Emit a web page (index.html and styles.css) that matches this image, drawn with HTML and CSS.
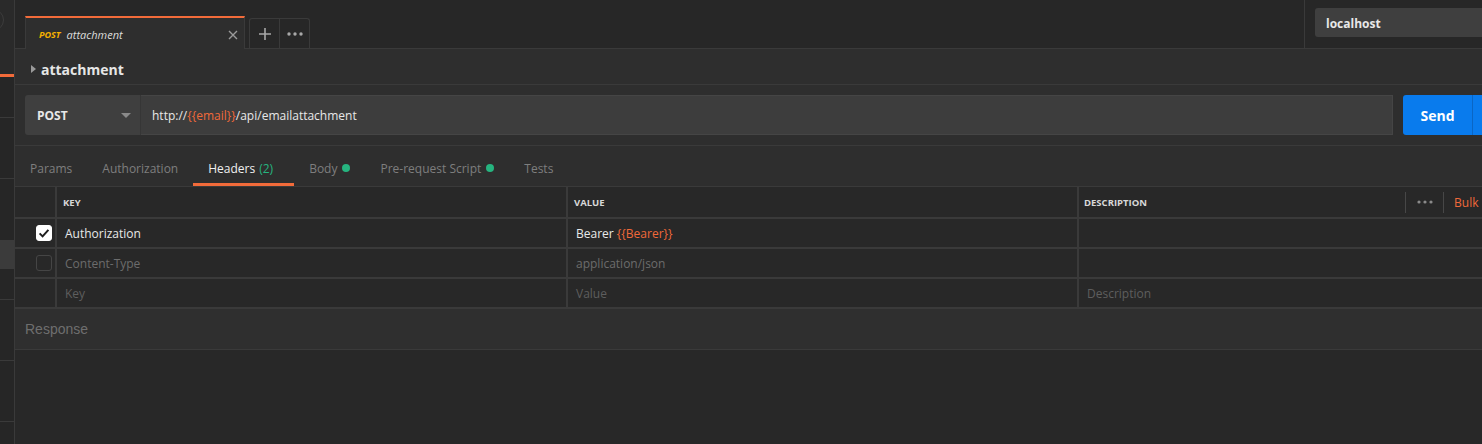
FILE: index.html
```html
<!DOCTYPE html>
<html>
<head>
<meta charset="utf-8">
<link rel="stylesheet" href="styles.css">
</head>
<body>
<div class="app">
  <aside class="sidebar">
    <div class="sb-top"><div class="sb-circle"></div></div>
    <div class="sb-accent"></div>
    <div class="sb-sec h40"></div>
    <div class="sb-sec h60"></div>
    <div class="sb-sec h120"><div class="sb-sel"></div></div>
    <div class="sb-sec h60"></div>
    <div class="sb-sec h60"></div>
    <div class="sb-rest"></div>
  </aside>
  <main class="main">
    <div class="topbar">
      <div class="req-tab">
        <span class="tab-method">POST</span>
        <span class="tab-name">attachment</span>
        <svg class="tab-close" width="10" height="10" viewBox="0 0 10 10"><path d="M1 1L9 9M9 1L1 9" stroke="#9a9a9a" stroke-width="1.4"/></svg>
      </div>
      <div class="tab-actions">
        <div class="tab-btn"><svg width="12" height="12" viewBox="0 0 12 12"><path d="M6 0V12M0 6H12" stroke="#a8a8a8" stroke-width="1.6"/></svg></div>
        <div class="tab-btn last"><svg width="16" height="4" viewBox="0 0 16 4"><circle cx="2" cy="2" r="1.7" fill="#a8a8a8"/><circle cx="8" cy="2" r="1.7" fill="#a8a8a8"/><circle cx="14" cy="2" r="1.7" fill="#a8a8a8"/></svg></div>
      </div>
      <div class="spacer"></div>
      <div class="env-area">
        <div class="env-box">localhost</div>
      </div>
    </div>
    <div class="title-row">
      <span class="caret"></span>
      <span class="title">attachment</span>
    </div>
    <div class="url-row">
      <div class="method">
        <span>POST</span>
        <span class="down"></span>
      </div>
      <div class="url-input">http://<span class="var">{{email}}</span>/api/emailattachment</div>
      <div class="send-group">
        <div class="send">Send</div>
        <div class="send-more"></div>
      </div>
    </div>
    <div class="tabs-row">
      <div class="tab">Params</div>
      <div class="tab">Authorization</div>
      <div class="tab active">Headers <span class="count">(2)</span></div>
      <div class="tab">Body <span class="dot"></span></div>
      <div class="tab">Pre-request Script <span class="dot"></span></div>
      <div class="tab">Tests</div>
    </div>
    <div class="grid">
      <div class="cell head"></div>
      <div class="cell head">KEY</div>
      <div class="cell head">VALUE</div>
      <div class="cell head desc-head">
        <span>DESCRIPTION</span>
        <span class="tools">
          <span class="vsep"></span>
          <svg class="more" width="16" height="4" viewBox="0 0 16 4"><circle cx="2" cy="2" r="1.6" fill="#8a8a8a"/><circle cx="8" cy="2" r="1.6" fill="#8a8a8a"/><circle cx="14" cy="2" r="1.6" fill="#8a8a8a"/></svg>
          <span class="vsep"></span>
          <span class="bulk">Bulk Edit</span>
        </span>
      </div>

      <div class="cell check"><span class="cb on"><svg width="16" height="16" viewBox="0 0 16 16"><path d="M3.6 8.4L6.6 11.4L12.4 4.8" fill="none" stroke="#1e1e1e" stroke-width="2"/></svg></span></div>
      <div class="cell">Authorization</div>
      <div class="cell">Bearer&nbsp;<span class="var">{{Bearer}}</span></div>
      <div class="cell"></div>

      <div class="cell check"><span class="cb"></span></div>
      <div class="cell dim">Content-Type</div>
      <div class="cell dim">application/json</div>
      <div class="cell"></div>

      <div class="cell check"></div>
      <div class="cell ph">Key</div>
      <div class="cell ph">Value</div>
      <div class="cell ph">Description</div>
    </div>
    <div class="response">Response</div>
    <div class="resp-body"></div>
  </main>
</div>
</body>
</html>
```
FILE: styles.css
```css
html, body {
  margin: 0;
  padding: 0;
  background: #282828;
  overflow: hidden;
}
body {
  font-family: "Open Sans", "DejaVu Sans", sans-serif;
  color: #e6e6e6;
}
.app {
  display: flex;
  width: 1482px;
  height: 444px;
  overflow: hidden;
}

/* sidebar */
.sidebar {
  width: 14px;
  flex: none;
  border-right: 1px solid #3a3a3a;
  background: #262626;
  display: flex;
  flex-direction: column;
  overflow: hidden;
}
.sb-top {
  height: 74px;
  background: #2a2a2a;
  overflow: hidden;
}
.sb-circle {
  width: 20px;
  height: 20px;
  border: 1px solid #3c3c3c;
  border-radius: 50%;
  margin: 9px 0 0 -18px;
}
.sb-accent {
  height: 3px;
  background: #f26b3a;
}
.sb-sec {
  border-bottom: 1px solid #3a3a3a;
}
.h40 { height: 40px; }
.h60 { height: 60px; }
.h120 { height: 120px; }
.sb-sel {
  margin-top: 61px;
  height: 29px;
  background: #3b3b3b;
}
.sb-rest { flex: 1; }

/* main */
.main {
  width: 1520px;
  flex: none;
  display: flex;
  flex-direction: column;
  background: #2e2e2e;
}

.topbar {
  height: 48px;
  border-bottom: 1px solid #3a3a3a;
  background: #272727;
  display: flex;
  align-items: flex-end;
  padding-left: 10px;
}
.req-tab {
  width: 205px;
  height: 30px;
  margin-bottom: -1px;
  border-top: 2px solid #f26b3a;
  border-left: 1px solid #3a3a3a;
  border-right: 1px solid #3a3a3a;
  background: #2e2e2e;
  display: flex;
  align-items: center;
  padding: 2px 0 0 13px;
  box-sizing: content-box;
  height: 29px;
  position: relative;
  z-index: 1;
}
.tab-method {
  font-size: 9px;
  font-weight: 700;
  font-style: italic;
  color: #f5b000;
  margin-right: 6px;
}
.tab-name {
  font-size: 11px;
  font-style: italic;
  color: #dcdcdc;
  flex: 1;
}
.tab-close {
  margin-right: 6px;
}
.tab-actions {
  display: flex;
  margin-left: 4px;
  height: 29px;
  border: 1px solid #3a3a3a;
  border-bottom: none;
  border-radius: 3px 3px 0 0;
}
.tab-btn {
  width: 29px;
  display: flex;
  align-items: center;
  justify-content: center;
  border-right: 1px solid #3a3a3a;
}
.tab-btn.last {
  border-right: none;
  width: 29px;
}
.spacer { flex: 1; }
.env-area {
  align-self: stretch;
  width: 220px;
  border-left: 1px solid #3a3a3a;
  padding: 8px 0 0 10px;
}
.env-box {
  height: 29px;
  border-radius: 3px;
  background: #3f3f3f;
  font-size: 12px;
  font-weight: 700;
  color: #e8e8e8;
  display: flex;
  align-items: center;
  padding: 1px 0 0 11px;
  box-sizing: border-box;
}

.title-row {
  height: 35px;
  box-sizing: border-box;
  padding-top: 5px;
  height: 36px;
  border-bottom: 1px solid #3a3a3a;
  display: flex;
  align-items: center;
  padding-left: 16px;
}
.caret {
  width: 0;
  height: 0;
  border-left: 5px solid #9a9a9a;
  border-top: 4px solid transparent;
  border-bottom: 4px solid transparent;
  margin-right: 5px;
}
.title {
  font-size: 14px;
  font-weight: 700;
  color: #e6e6e6;
}

.url-row {
  height: 40px;
  padding: 10px;
  border-bottom: 1px solid #3a3a3a;
  display: flex;
}
.method {
  width: 116px;
  flex: none;
  background: #3f3f3f;
  border-radius: 3px 0 0 3px;
  display: flex;
  align-items: center;
  justify-content: space-between;
  padding: 0 9px 0 12px;
  box-sizing: border-box;
  font-size: 12px;
  font-weight: 700;
  color: #e8e8e8;
  border-right: 1px solid #363636;
}
.down {
  width: 0;
  height: 0;
  border-top: 5px solid #8a8a8a;
  border-left: 5px solid transparent;
  border-right: 5px solid transparent;
}
.url-input {
  flex: 1;
  background: #3d3d3d;
  border: 1px solid #454545;
  border-left: none;
  display: flex;
  align-items: center;
  padding-left: 11px;
  font-size: 12px;
  color: #e8e8e8;
}
.var { color: #f0693a; }
.send-group {
  display: flex;
  margin-left: 10px;
  width: 122px;
  flex: none;
}
.send {
  width: 69px;
  background: #097bed;
  border-radius: 3px 0 0 3px;
  display: flex;
  align-items: center;
  justify-content: center;
  font-size: 14px;
  font-weight: 700;
  color: #ffffff;
  border-right: 1px solid #0a66c4;
}
.send-more {
  flex: 1;
  background: #097bed;
}

.tabs-row {
  height: 40px;
  display: flex;
}
.tab {
  padding: 7px 15px 0;
  display: flex;
  align-items: center;
  font-size: 12px;
  color: #7e7e7e;
  border-bottom: 3px solid transparent;
}
.tab.active {
  color: #f0f0f0;
  border-bottom-color: #f26b3a;
  padding-right: 21px;
}
.count {
  color: #26b47f;
  margin-left: 4px;
}
.dot {
  width: 8px;
  height: 8px;
  border-radius: 50%;
  background: #26b47f;
  margin-left: 5px;
}

.grid {
  display: grid;
  grid-template-columns: 40px 509px 509px 1fr;
  grid-template-rows: 30px 28px 28px 28px;
  gap: 2px;
  padding: 1px 0 2px;
  background: #3a3a3a;
}
.cell {
  background: #282828;
  display: flex;
  align-items: center;
  padding: 0 8px;
  font-size: 12px;
  color: #e8e8e8;
  white-space: nowrap;
  overflow: hidden;
}
.head {
  font-size: 9.5px;
  font-weight: 700;
  color: #d8d8d8;
  padding-left: 6px;
}
.desc-head {
  justify-content: space-between;
  padding-left: 5px;
}
.tools {
  display: flex;
  align-items: center;
  padding-right: 24px;
}
.vsep {
  width: 1px;
  height: 21px;
  background: #474747;
}
.more {
  margin: 0 10px 0 11px;
}
.bulk {
  margin-left: 10px;
  font-size: 12px;
  font-weight: 400;
  color: #f0693a;
}
.check {
  justify-content: flex-end;
  padding: 0 3px 0 0;
}
.cb {
  width: 16px;
  height: 16px;
  border-radius: 3px;
  box-sizing: border-box;
  border: 1px solid #454545;
  display: block;
}
.cb.on {
  background: #ffffff;
  border-color: #ffffff;
}
.cb.on svg { display: block; margin: -1px; }
.dim { color: #6c6c6c; }
.ph { color: #5e5e5e; }

.response {
  height: 40px;
  border-bottom: 1px solid #3a3a3a;
  display: flex;
  align-items: center;
  padding-left: 10px;
  font-family: "Liberation Sans", Arial, sans-serif;
  font-size: 14px;
  color: #6e6e6e;
  background: #2f2f2f;
}
.resp-body {
  flex: 1;
  background: #282828;
}
```
